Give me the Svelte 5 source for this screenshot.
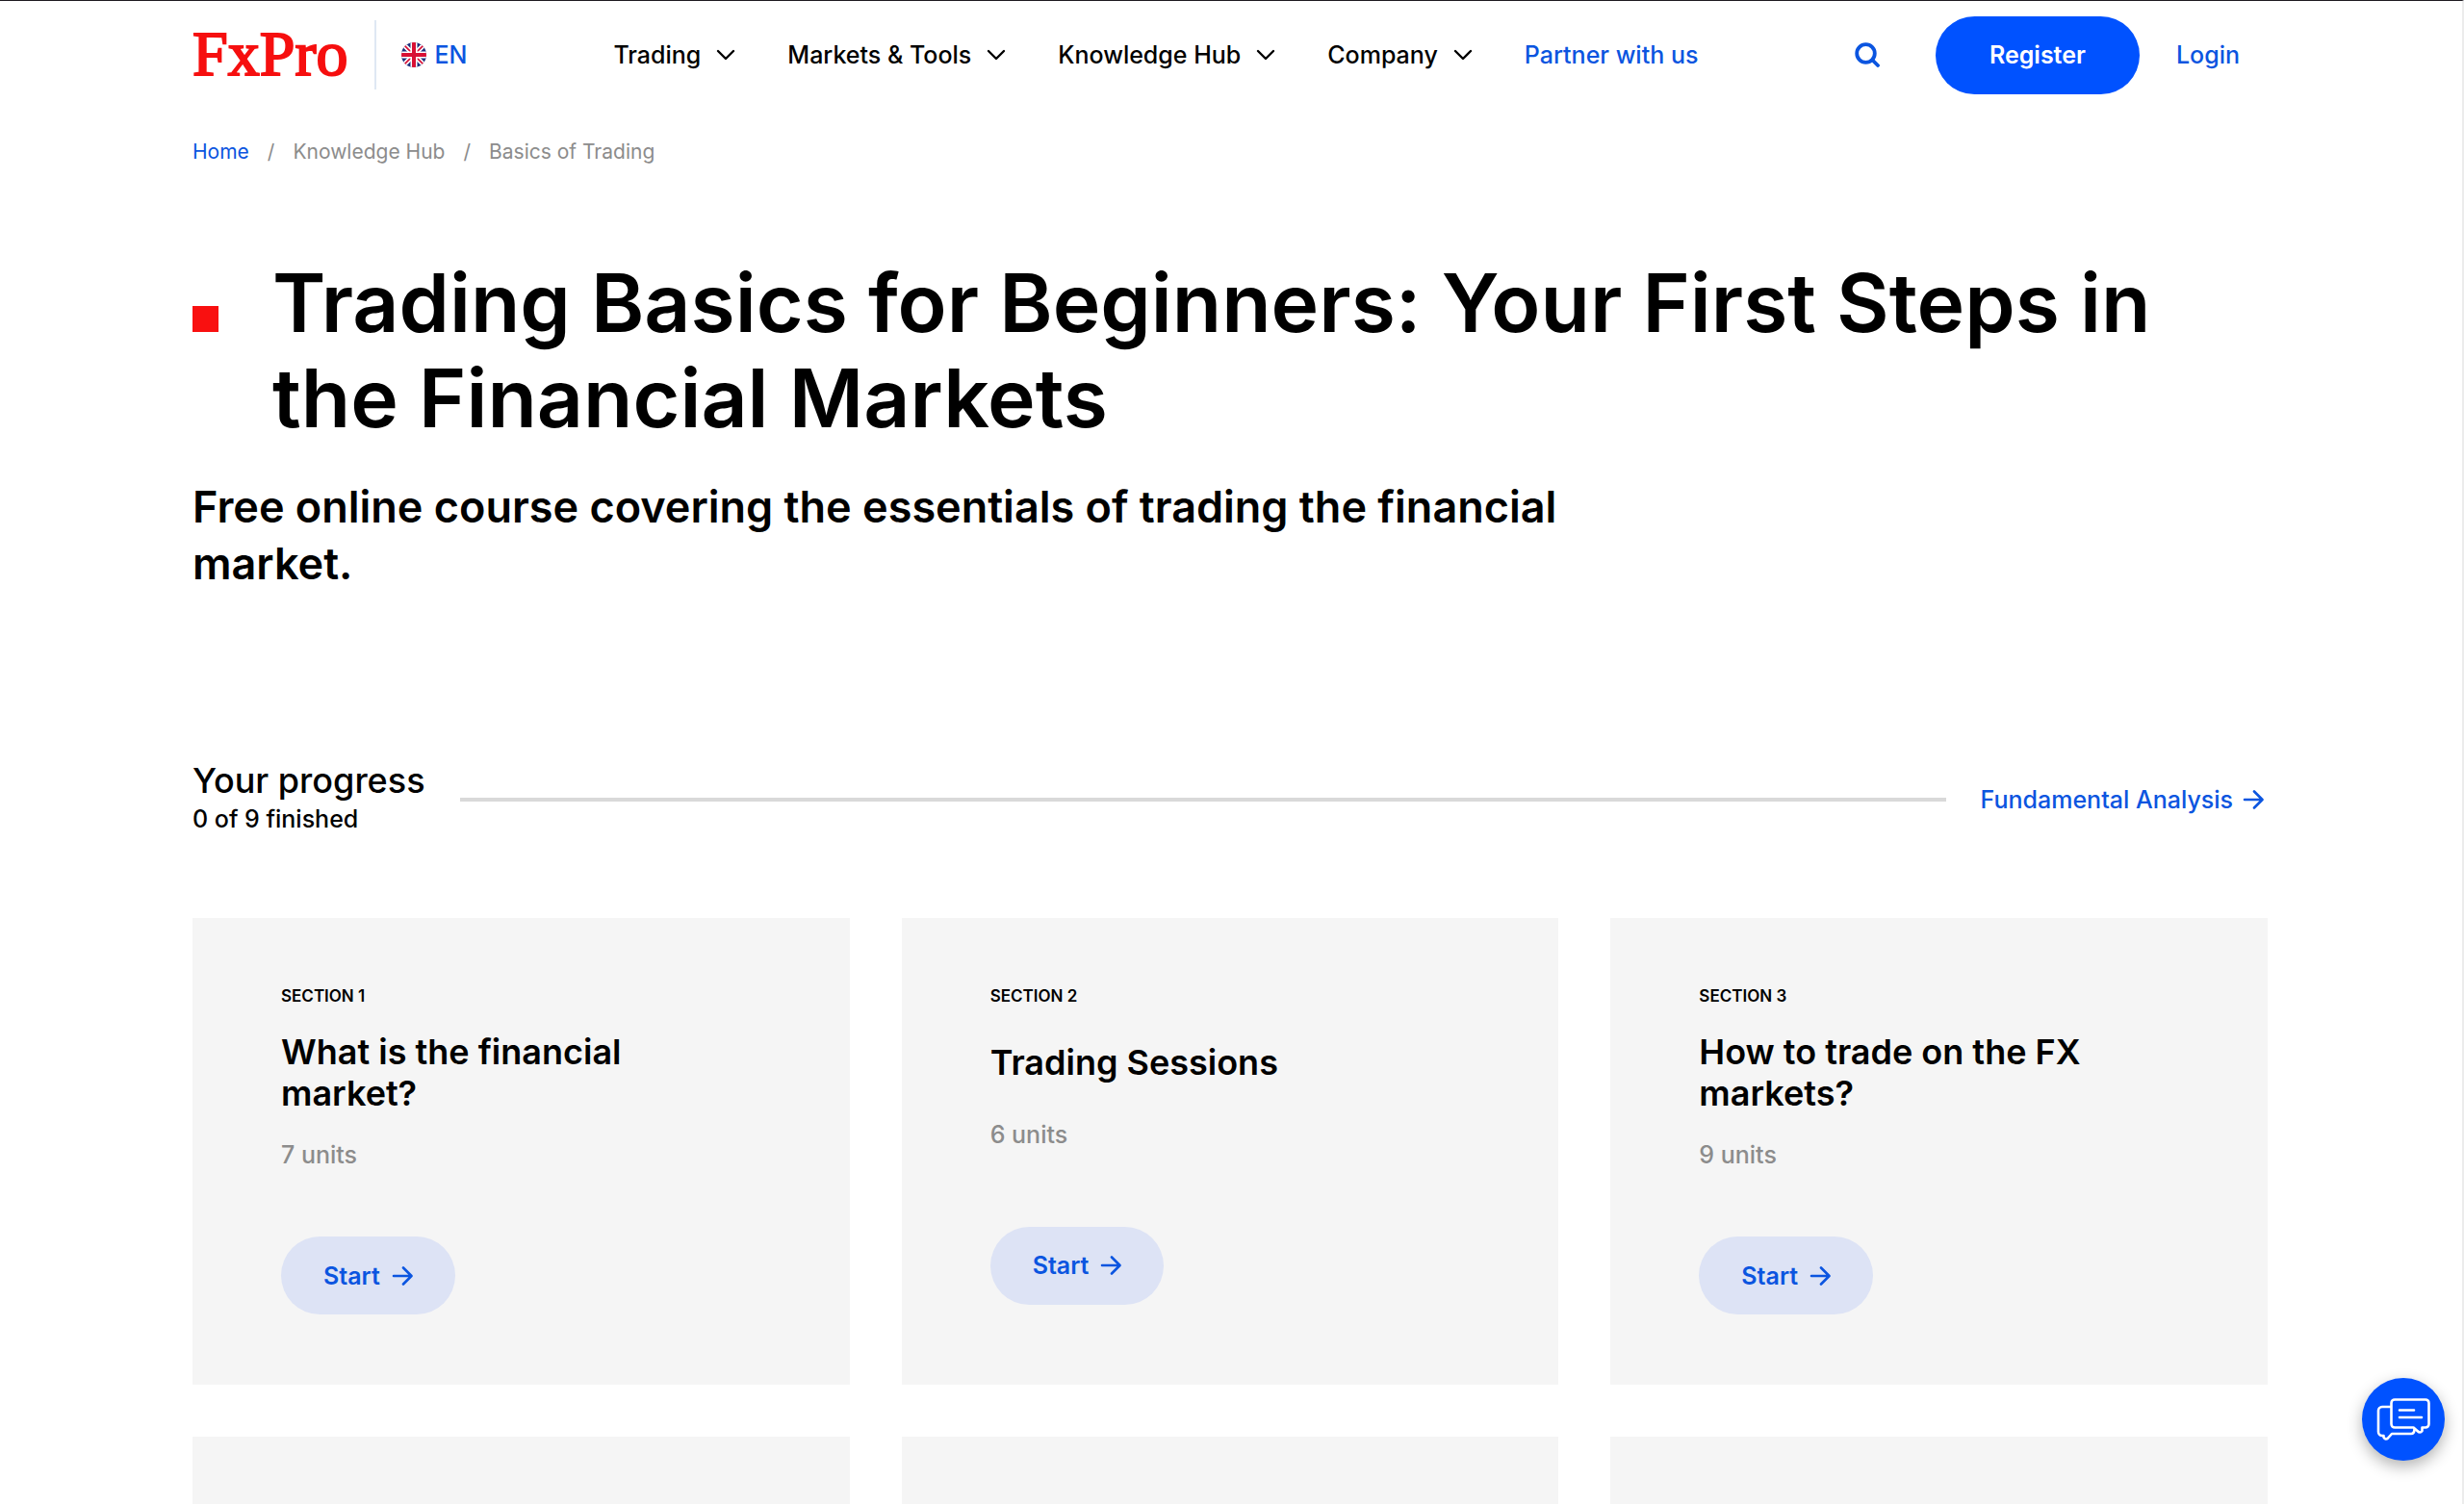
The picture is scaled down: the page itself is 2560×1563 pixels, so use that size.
<script lang="ts">
  type Section = { id: number; title: string; units: number };

  const menu = ['Trading', 'Markets & Tools', 'Knowledge Hub', 'Company'];

  const sections: Section[] = [
    { id: 1, title: 'What is the financial market?', units: 7 },
    { id: 2, title: 'Trading Sessions', units: 6 },
    { id: 3, title: 'How to trade on the FX markets?', units: 9 },
  ];

  // cards of the next row, content not loaded yet
  const pending = [4, 5, 6];

  let finished = $state(0);
  const total = 9;
</script>

{#snippet arrow()}
  <svg class="arrow" viewBox="0 0 22 22" fill="none" stroke="currentColor" stroke-width="2.6" stroke-linecap="round" stroke-linejoin="round" aria-hidden="true">
    <path d="M2 11h18M12 2.5l8.5 8.5-8.5 8.5"/>
  </svg>
{/snippet}

<div class="page">
  <header class="header">
    <a class="logo" href="/">FxPro</a>
    <button class="lang">
      <svg class="flag" viewBox="0 0 26 26" aria-hidden="true">
        <clipPath id="flag-clip"><circle cx="13" cy="13" r="13"/></clipPath>
        <g clip-path="url(#flag-clip)">
          <rect width="26" height="26" fill="#1d2f7c"/>
          <path d="M0 0l26 26M26 0L0 26" stroke="#fff" stroke-width="5"/>
          <path d="M0 0l26 26M26 0L0 26" stroke="#d80f34" stroke-width="1.6"/>
          <path d="M13 0v26M0 13h26" stroke="#fff" stroke-width="7"/>
          <path d="M13 0v26M0 13h26" stroke="#d80f34" stroke-width="4"/>
        </g>
      </svg>
      EN
    </button>

    <nav class="nav">
      {#each menu as item}
        <button class="nav-item">
          {item}
          <svg class="chevron" viewBox="0 0 20 12" fill="none" stroke="currentColor" stroke-width="2.4" stroke-linecap="round" stroke-linejoin="round" aria-hidden="true">
            <path d="M2 2l8 8 8-8"/>
          </svg>
        </button>
      {/each}
      <a class="nav-item partner" href="/partners">Partner with us</a>
    </nav>

    <div class="actions">
      <button class="search" aria-label="Search">
        <svg viewBox="0 0 26 26" fill="none" stroke="currentColor" stroke-width="3.8" stroke-linecap="round" aria-hidden="true">
          <circle cx="11.5" cy="11.5" r="9.3"/>
          <path d="M18.5 18.5l5.5 5.5"/>
        </svg>
      </button>
      <a class="register" href="/register">Register</a>
      <a class="login" href="/login">Login</a>
    </div>
  </header>

  <nav class="breadcrumbs" aria-label="Breadcrumb">
    <a href="/">Home</a>
    <span>/</span>
    <span>Knowledge Hub</span>
    <span>/</span>
    <span>Basics of Trading</span>
  </nav>

  <main>
    <div class="hero">
      <h1>Trading Basics for Beginners: Your First Steps in the Financial Markets</h1>
      <p>Free online course covering the essentials of trading the financial market.</p>
    </div>

    <div class="progress">
      <div>
        <h2>Your progress</h2>
        <p>{finished} of {total} finished</p>
      </div>
      <div class="track"><div class="fill" style="width: {(finished / total) * 100}%"></div></div>
      <a class="next" href="/fundamental-analysis">Fundamental Analysis {@render arrow()}</a>
    </div>

    <div class="grid">
      {#each sections as s (s.id)}
        <article class="card">
          <span class="label">Section {s.id}</span>
          <h3>{s.title}</h3>
          <p class="units">{s.units} units</p>
          <div class="card-action">
            <a class="start" href="/section/{s.id}">Start {@render arrow()}</a>
          </div>
        </article>
      {/each}
      {#each pending as id (id)}
        <article class="card"></article>
      {/each}
    </div>
  </main>

  <button class="chat" aria-label="Chat">
    <svg viewBox="0 0 56 44" fill="none" stroke="currentColor" stroke-width="2.6" stroke-linecap="round" stroke-linejoin="round" aria-hidden="true">
      <path d="M14.500 9H6a4 4 0 0 0-4 4v22a4 4 0 0 0 4 4h1.500v1.500q2 3.500 4.500 1l4-4.500h20q3.500 0 3.500-5"/>
      <path d="M19 1.500h32a3.500 3.500 0 0 1 3.500 3.500v22a3.500 3.500 0 0 1-3.500 3.500h-3.500v3.500q-2 3-5 0l-4-3.500H19a3.500 3.500 0 0 1-3.500-3.500V5a3.500 3.500 0 0 1 3.500-3.500z"/>
      <path d="M24 12.500h15M24 20h23"/>
    </svg>
  </button>
</div>

<style>
  :global(body) {
    margin: 0;
    background: #fff;
  }

  .page {
    box-sizing: border-box;
    position: relative;
    height: 100vh;
    overflow: hidden;
    padding: 0 202px 0 200px;
    border-top: 1px solid #1d1a20;
    border-right: 2px solid #ececec;
    font-family: Inter, "Liberation Sans", sans-serif;
    font-size: 25px;
    font-weight: 500;
    color: #000;
  }

  a { color: #0b55e0; text-decoration: none; }
  button { font: inherit; color: inherit; background: none; border: 0; padding: 0; cursor: pointer; }
  h1, h2, h3, p { margin: 0; }

  .header {
    display: flex;
    align-items: center;
    height: 112px;
  }
  .logo {
    font-family: "Liberation Serif", serif;
    font-size: 66px;
    font-weight: 400;
    line-height: 70px;
    color: #f60f0f;
    -webkit-text-stroke: 2px #f60f0f;
    padding: 0 28px 2px 0;
    border-right: 2px solid #dfe8f3;
  }
  .lang {
    display: flex;
    align-items: center;
    gap: 8px;
    margin-left: 26px;
    color: #0b55e0;
  }
  .flag { width: 26px; height: 26px; }

  .nav {
    display: flex;
    align-items: center;
    gap: 54px;
    margin-left: 152px;
  }
  .nav-item {
    display: flex;
    align-items: center;
    gap: 16px;
    white-space: nowrap;
  }
  .chevron { width: 20px; height: 12px; }

  .actions {
    display: flex;
    align-items: center;
    margin-left: auto;
    padding-right: 29px;
  }
  .search { display: flex; color: #0b55e0; margin-right: 58px; }
  .search svg { width: 26px; height: 26px; }
  .register {
    padding: 0 56px;
    line-height: 81px;
    border-radius: 41px;
    background: #0052ff;
    color: #fff;
    margin-right: 38px;
    font-weight: 600;
  }

  .breadcrumbs {
    display: flex;
    gap: 19px;
    margin-top: 30px;
    font-size: 21px;
    font-weight: 400;
    line-height: 30px;
    color: #8c8c8c;
  }

  .hero { margin-top: 92px; }
  h1 {
    display: flex;
    align-items: baseline;
    gap: 56px;
    font-size: 84px;
    font-weight: 600;
    line-height: 99px;
  }
  h1::before {
    content: '';
    flex: none;
    width: 27px;
    height: 27px;
    background: #f91010;
  }
  .hero p {
    max-width: 1480px;
    margin-top: 34px;
    font-size: 45px;
    font-weight: 600;
    line-height: 59px;
  }

  .progress {
    display: flex;
    align-items: center;
    gap: 36px;
    margin-top: 174px;
  }
  h2 { font-size: 36px; font-weight: 500; line-height: 44px; }
  .progress p { font-size: 25px; line-height: 36px; padding-bottom: 4px; }
  .track { flex: 1; height: 4px; background: #d9d9d9; }
  .fill { height: 100%; background: #0052ff; }
  .next {
    display: flex;
    align-items: center;
    gap: 10px;
    padding-right: 4px;
  }
  .arrow { width: 22px; height: 22px; }

  .grid {
    display: grid;
    grid-template-columns: repeat(3, 1fr);
    gap: 54px;
    margin-top: 81px;
  }
  .card {
    box-sizing: border-box;
    display: flex;
    flex-direction: column;
    min-height: 485px;
    padding: 70px 92px 4px;
    background: #f5f5f5;
  }
  .label {
    font-size: 17px;
    font-weight: 600;
    line-height: 22px;
    text-transform: uppercase;
  }
  h3 {
    display: flex;
    align-items: center;
    min-height: 65px;
    margin-top: 26px;
    font-size: 36px;
    font-weight: 600;
    line-height: 43px;
  }
  .units { margin-top: 26px; line-height: 32px; color: #8c8c8c; }
  .card-action { flex: 1; display: flex; align-items: center; }
  .start {
    display: flex;
    align-items: center;
    gap: 12px;
    height: 81px;
    padding: 0 44px;
    border-radius: 41px;
    background: #dde3f5;
    font-weight: 600;
  }

  .chat {
    position: absolute;
    right: 18px;
    bottom: 45px;
    display: flex;
    align-items: center;
    justify-content: center;
    width: 86px;
    height: 86px;
    border-radius: 50%;
    background: #0052ff;
    color: #fff;
    box-shadow: 0 6px 16px rgba(0, 0, 0, 0.3);
  }
  .chat svg { width: 56px; height: 44px; }
</style>
